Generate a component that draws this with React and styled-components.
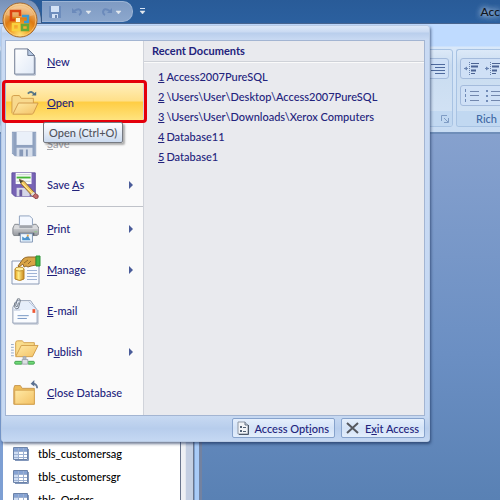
import styled, { createGlobalStyle } from "styled-components"

const GlobalStyle = createGlobalStyle`
    * {
        box-sizing: border-box;
    }

    body {
        margin: 0;
        overflow: hidden;
        font-family: Lato, "Open Sans", sans-serif;
        font-size: 11px;
        font-weight: 500;
        font-variant-ligatures: none;
        color: #23237c;
    }

    button {
        font: inherit;
        font-variant-ligatures: none;
        color: inherit;
        background: none;
        border: 0;
        padding: 0;
        text-align: left;
    }

    svg {
        display: block;
        flex: none;
    }

    ul, ol {
        list-style: none;
        margin: 0;
        padding: 0;
    }
`

const NewIcon = () => (
    <svg width="28" height="28" viewBox="0 0 30 30">
        <path d="M4 1h14l7 7v20H4z" fill="url(#paper)" stroke="#66738c" />
        <path d="M18 1v7h7z" fill="#b9cbe5" stroke="#66738c" />
        <path d="M5 29h21V10" fill="none" stroke="#9aa7bd" />
    </svg>
)

const OpenIcon = () => (
    <svg width="28" height="28" viewBox="0 0 30 30">
        <path d="M1 26V9q0-2 2-2h6l2 3h13v5" fill="#f8d98d" stroke="#d19b48" />
        <path d="M2 27l6-12h21l-5 11q-1 1-2 1z" fill="url(#folder)" stroke="#cf984a" />
        <path d="M18 5q4-4 7 1" fill="none" stroke="#5c7b88" strokeWidth="2" />
        <path d="M22 7h5V3z" fill="#4c6c82" />
    </svg>
)

const SaveIcon = () => (
    <svg width="28" height="28" viewBox="0 0 30 30">
        <path d="M1 2h26v26H4l-3-3z" fill="#8fa1bf" />
        <path d="M6 2h17v14H6z" fill="#eaf0f9" />
        <path d="M6 19h17v9H6z" fill="#d6deeb" />
        <path d="M9 21h4v7H9zM16 21h2v7h-2z" fill="#8799b8" />
        <path d="M2 3v22M26 3v24" stroke="#a9b8d0" />
    </svg>
)

const SaveAsIcon = () => (
    <svg width="28" height="28" viewBox="0 0 30 30">
        <path d="M1 2h25v25H4l-3-3z" fill="#7763b5" stroke="#5f4e9d" />
        <path d="M5 2h17v12H5z" fill="#fafcfb" />
        <path d="M6 4h15M6 11h15" stroke="#c3cec8" />
        <path d="M6 7h15" stroke="#45b535" strokeWidth="2" />
        <path d="M6 18h14v9H6z" fill="#d5d6e8" />
        <path d="M9 20h3v7H9z" fill="#6a5a9c" />
        <path d="M9 9l5 2 12 13-3 3-12-13z" fill="#f2c65c" stroke="#896438" />
        <path d="M12 13l12 12" stroke="#fff0a4" />
        <path d="M9 9l1 4 3-2z" fill="#443" />
        <path d="M23 27l3-3 3 2q1 3-2 4z" fill="#c66b6c" stroke="#884244" />
        <path d="M22 26l3-3" stroke="#ddd" strokeWidth="2" />
    </svg>
)

const PrintIcon = () => (
    <svg width="28" height="28" viewBox="0 0 30 30">
        <path d="M9 1h11l3 3v9H9z" fill="#f4f8ff" stroke="#8b9ebb" />
        <path d="M4 10h4v3h16v-3h3l3 4v6l-2 2H3l-1-2v-6z" fill="url(#metal)" stroke="#80848b" />
        <path d="M4 11h23l2 4H3z" fill="#d9dadd" />
        <path d="M9 11h14v3H9z" fill="#a2a6ad" />
        <path d="M8 19h17v3H8z" fill="#5f6670" />
        <path d="M25 18h3" stroke="#8fcb87" strokeWidth="1" />
        <path d="M10 20h13v9H10z" fill="#eef7ff" stroke="#7e93b3" />
        <path d="M12 27v-4l3 2 3-3 3 5z" fill="#4c94ce" />
        <path d="M17 21h2v2h-2z" fill="#e9a643" />
    </svg>
)

const ManageIcon = () => (
    <svg width="30" height="30" viewBox="0 0 30 30">
        <path d="M1 6h27v23H1z" fill="#f8faff" stroke="#8b9ab5" />
        <path d="M16 15.500h10M16 18.500h10M16 21.500h10M16 24.500h10" stroke="#9fb3d6" />
        <path d="M4 14v10q5 3 9 0V14z" fill="url(#gold)" stroke="#b58227" />
        <ellipse cx="8.500" cy="14" rx="4.500" ry="2" fill="#fff0a0" stroke="#c2922e" />
        <path d="M7 11l5-7q2-2 5-2h8v8l-5 1-3 1-2-1-2 1-1-3-4 3z" fill="#d9a445" stroke="#94692a" />
        <path d="M13 8l4-3M17 9l3-3" stroke="#94692a" />
        <path d="M25 1h4v10h-4z" fill="#42b647" stroke="#2c9137" />
    </svg>
)

const MailIcon = () => (
    <svg width="28" height="28" viewBox="0 0 30 30">
        <path d="M2 11l4-7h15l7 10v14H2z" fill="#fafcff" stroke="#8795ad" />
        <path d="M3 14l4-9h14l7 9z" fill="#e6eefb" />
        <path d="M3 14h7M19 5l9 9" stroke="#b5c2d8" />
        <path d="M7 20h12M7 23h10" stroke="#7090c1" />
        <path d="M23 13h3v4h-3z" fill="#ee5836" />
        <path d="M4 6v5q1 3 4 1l2-8q0-3-3-2L5 9q0 2 2 1l1-4" fill="none" stroke="#6a7481" />
        <path d="M3 29h26V14" fill="none" stroke="#abb5c7" />
    </svg>
)

const PublishIcon = () => (
    <svg width="28" height="28" viewBox="0 0 30 30">
        <path d="M0 7h3M0 10h3M0 13h3M0 16h3M0 19h3" stroke="#91a6c5" />
        <path d="M5 19V5q0-2 2-2h5l2 2h11v4" fill="#f9dd8c" stroke="#d19d49" />
        <path d="M5 20l6-12h18l-6 12z" fill="url(#folder)" stroke="#d19d49" />
        <path d="M13 20h3v5h-3z" fill="#b4bbc4" stroke="#a0a6ae" />
        <rect x="4" y="25" width="8" height="3" rx="1" fill="#70da77" stroke="#409e4b" />
        <rect x="18" y="25" width="7" height="3" rx="1" fill="#70da77" stroke="#409e4b" />
        <path d="M12 23h6v5h-6z" fill="#dce0e4" stroke="#a0a6ae" />
    </svg>
)

const CloseIcon = () => (
    <svg width="28" height="28" viewBox="0 0 30 30">
        <path d="M3 27V10l1-3h6l2 3h13v17z" fill="#edbc59" stroke="#c79750" />
        <path d="M4 12h21v15H4z" fill="url(#folder)" stroke="#d5a452" />
        <path d="M23 5q5 0 5 5" fill="none" stroke="#667b99" strokeWidth="2" />
        <path d="M21 5l4-4v7z" fill="#596f91" />
    </svg>
)

const OfficeLogo = () => (
    <svg width="36" height="36" viewBox="0 0 36 36">
        <defs>
            <radialGradient id="orb" cx=".5" cy=".95" r=".9">
                <stop offset="0" stopColor="#ffe374" />
                <stop offset=".3" stopColor="#f6a92e" />
                <stop offset=".58" stopColor="#dd7a13" />
                <stop offset="1" stopColor="#f1c68b" />
            </radialGradient>
            <linearGradient id="paper" x2="1" y2="1">
                <stop stopColor="#fff" />
                <stop offset="1" stopColor="#e0e9f7" />
            </linearGradient>
            <linearGradient id="folder" x2="1" y2="1">
                <stop stopColor="#ffeaa6" />
                <stop offset="1" stopColor="#f3c164" />
            </linearGradient>
            <linearGradient id="metal" x2="0" y2="1">
                <stop stopColor="#e5e6e8" />
                <stop offset="1" stopColor="#94979d" />
            </linearGradient>
            <linearGradient id="gold">
                <stop stopColor="#e8a520" />
                <stop offset=".4" stopColor="#ffeb85" />
                <stop offset="1" stopColor="#c8861d" />
            </linearGradient>
        </defs>
        <circle cx="18" cy="18" r="17" fill="url(#orb)" stroke="#a3672c" />
        <circle cx="18" cy="18" r="16" fill="none" stroke="#fbd799" opacity=".6" />
        <path d="M4 13q4-9 14-9t14 9q-13 5-28 0z" fill="#fff" opacity=".22" />
        <g fill="none" strokeWidth="2.500">
            <path d="M13 18H9V9h9v5" stroke="#dc4312" />
            <path d="M20 14h6v6h-4" stroke="#3a9ad3" />
            <path d="M17 22h-6v6h6z" stroke="#f9d13e" />
            <path d="M20 23h6v5h-6z" stroke="#67a936" />
        </g>
        <path d="M14 16h4v4h-4z" fill="#fff1c9" />
    </svg>
)

const DiskGlyph = () => (
    <svg width="14" height="14" viewBox="0 0 14 14">
        <path d="M1 1h12v12H2l-1-1z" fill="#6d8dbd" />
        <path d="M3 1h8v6H3zM4 9h6v4H4z" fill="#d3e2f6" />
        <path d="M7 10h2v3H7z" fill="#6d87b0" />
    </svg>
)

const UndoGlyph = ({ flip }) => (
    <svg width="12" height="12" viewBox="0 0 12 12">
        <g transform={flip ? "matrix(-1 0 0 1 12 0)" : undefined}>
            <path d="M3 5q6-4 7 1 0 2-2 3" fill="none" stroke="#6b8abb" strokeWidth="2" />
            <path d="M1 2v5h5z" fill="#6b8abb" />
        </g>
    </svg>
)

const DropGlyph = ({ bar }) => (
    <svg width="7" height="9" viewBox="0 0 7 9">
        {bar && <path d="M1 1.500h5" stroke="#d8e4f5" />}
        <path d="M1 4h5L3.500 7z" fill="#e4e9ee" stroke="#e4e9ee" strokeWidth=".5" />
    </svg>
)

const TableGlyph = () => (
    <svg width="16" height="14" viewBox="0 0 16 14">
        <path d="M.5.5h14v12H.5z" fill="#fff" stroke="#6c83a9" />
        <path d="M1 1h13v3H1z" fill="#86a3d3" />
        <path d="M1 4h4v8H1z" fill="#d0def3" />
        <path d="M1 4.500h13M1 7.500h13M1 10.500h13M5.500 1v11M10.500 1v11" stroke="#9db1d2" />
        <path d="M15.500 2v11.500H2" fill="none" stroke="#8297bb" />
    </svg>
)

const IndentGlyph = ({ back }) => (
    <svg width="15" height="13" viewBox="0 0 15 13">
        <path d="M7 1.500h8M7 11.500h4" stroke="#4c6493" />
        <path d="M7 4.500h7M7 8.500h5" stroke="#4a6294" strokeWidth="2" />
        <path d="M5.500 0v13" stroke="#6780ab" strokeDasharray="1 1" />
        <path d="M0 6.500h4" stroke="#7089b5" />
        <path d={back ? "M0 6.500l3-2v4z" : "M4 6.500l-3-2v4z"} fill="#6a84b2" />
    </svg>
)

const ListGlyph = ({ dots }) => (
    <svg width="15" height="13" viewBox="0 0 15 13">
        <path d="M6 2.500h9M6 6.500h9M6 11.500h9" stroke="#7287ad" />
        {dots
            ? <path d="M1 1h2v2H1zM1 6h2v2H1zM1 11h2v2H1z" fill="#718bb7" />
            : <path d="M1.500 0v3M1.500 5v3M1.500 10v3" stroke="#718bb7" />}
    </svg>
)

const AlignGlyph = () => (
    <svg width="14" height="12" viewBox="0 0 14 12">
        <path d="M0 1.500h14M4 4.500h10M0 7.500h14M4 10.500h10" stroke="#4f6a9d" />
    </svg>
)

const OptionsGlyph = () => (
    <svg width="12" height="14" viewBox="0 0 12 14">
        <path d="M1 1h7l3 3v9H1z" fill="#f2f4f7" stroke="#8d97a5" />
        <path d="M11.500 4v9.500H2" fill="none" stroke="#4c5868" />
        <path d="M8 1v3h3" fill="#c4cfdf" stroke="#687485" />
        <path d="M3 5h2v2H3zM3 9h2v2H3z" fill="#536275" />
        <path d="M6 6.500h3M6 10.500h3" stroke="#536275" />
    </svg>
)

const ExitGlyph = () => (
    <svg width="14" height="14" viewBox="0 0 14 14">
        <path d="M1 2l11 10M12 2L1 12" stroke="#55585f" strokeWidth="2" />
    </svg>
)

const menuItems = [
    { icon: NewIcon, label: "_New" },
    { icon: OpenIcon, label: "_Open", active: true },
    { icon: SaveIcon, label: "_Save", disabled: true },
    { icon: SaveAsIcon, label: "Save _As", arrow: true },
    { icon: PrintIcon, label: "_Print", arrow: true, divider: true },
    { icon: ManageIcon, label: "_Manage", arrow: true },
    { icon: MailIcon, label: "_E-mail" },
    { icon: PublishIcon, label: "P_ublish", arrow: true },
    { icon: CloseIcon, label: "_Close Database" },
]

const recent = [
    "Access2007PureSQL",
    "\\Users\\User\\Desktop\\Access2007PureSQL",
    "\\Users\\User\\Downloads\\Xerox Computers",
    "Database11",
    "Database1",
]

const tables = ["tbls_customersag", "tbls_customersgr", "tbls_Orders"]

// the letter after "_" is the access key
const KeyLabel = ({ text }) => {
    const [before, after] = text.split("_")
    return (
        <span>
            {before}<u>{after[0]}</u>{after.slice(1)}
        </span>
    )
}

const App = () => {
    return (
        <>
            <GlobalStyle />
            <Window>
                <TitleBar>
                    <OrbCorner />
                    <QuickAccess>
                        <ToolButton aria-label="Save"><DiskGlyph /></ToolButton>
                        <ToolButton aria-label="Undo"><UndoGlyph /><DropGlyph /></ToolButton>
                        <ToolButton aria-label="Redo"><UndoGlyph flip /><DropGlyph /></ToolButton>
                    </QuickAccess>
                    <ToolButton aria-label="Customize toolbar"><DropGlyph bar /></ToolButton>
                    <Title>Acc</Title>
                </TitleBar>
                <Ribbon>
                    <Group $grow>
                        <GroupTools $end>
                            <ToolBox><ToolButton aria-label="Align right"><AlignGlyph /></ToolButton></ToolBox>
                        </GroupTools>
                        <GroupLabel>
                            <svg width="8" height="8" viewBox="0 0 8 8">
                                <path d="M.5 6V.5H6M3 3l4 4M7.500 3v4.500H3" fill="none" stroke="#7f9cc4" />
                            </svg>
                        </GroupLabel>
                    </Group>
                    <Group>
                        <GroupTools>
                            <ToolBox>
                                <ToolButton aria-label="Decrease indent"><IndentGlyph back /></ToolButton>
                                <ToolButton aria-label="Increase indent"><IndentGlyph /></ToolButton>
                            </ToolBox>
                            <ToolBox>
                                <ToolButton aria-label="Numbering"><ListGlyph /></ToolButton>
                                <ToolButton aria-label="Bullets"><ListGlyph dots /></ToolButton>
                            </ToolBox>
                        </GroupTools>
                        <GroupLabel>Rich</GroupLabel>
                    </Group>
                </Ribbon>
                <Body>
                    <NavPane>
                        <TableList>
                            {tables.map((name) => (
                                <TableRow key={name}><TableGlyph />{name}</TableRow>
                            ))}
                        </TableList>
                        <ScrollTrack />
                    </NavPane>
                    <Splitter />
                    <Workspace />
                </Body>

                <Menu>
                    <Panels>
                        <Commands>
                            {menuItems.map(({ icon: Icon, label, active, disabled, arrow, divider }) => (
                                <Command key={label} $divider={divider}>
                                    <CommandButton $active={active} disabled={disabled}>
                                        <IconSlot><Icon /></IconSlot>
                                        <KeyLabel text={label} />
                                        {arrow && <Arrow width="4" height="8" viewBox="0 0 4 8"><path d="M0 0l4 4-4 4z" fill="#4a5c99" /></Arrow>}
                                    </CommandButton>
                                    {active && <Highlight />}
                                    {active && <Tooltip role="tooltip">Open (Ctrl+O)</Tooltip>}
                                </Command>
                            ))}
                        </Commands>
                        <Recent>
                            <RecentTitle>Recent Documents</RecentTitle>
                            <RecentList>
                                {recent.map((doc, i) => (
                                    <li key={doc}>
                                        <RecentLink href="#"><u>{i + 1}</u><span>{doc}</span></RecentLink>
                                    </li>
                                ))}
                            </RecentList>
                        </Recent>
                    </Panels>
                    <MenuFooter>
                        <FooterButton><OptionsGlyph /><KeyLabel text="Access Opt_ions" /></FooterButton>
                        <FooterButton><ExitGlyph /><KeyLabel text="E_xit Access" /></FooterButton>
                    </MenuFooter>
                </Menu>
                <OfficeButton aria-label="Office Button"><OfficeLogo /></OfficeButton>
            </Window>
        </>
    )
}

const Window = styled.div`
    position: relative;
    display: flex;
    flex-direction: column;
    height: 100vh;
    overflow: hidden;
    background: #6488bd;
`

const TitleBar = styled.header`
    display: flex;
    align-items: center;
    height: 24px;
    flex: none;
    background: linear-gradient(#295b98, #2b609f);
    border-bottom: 1px solid #48658f;
`

const OrbCorner = styled.div`
    width: 42px;
    height: 23px;
    background: linear-gradient(#7791b8, #93acd0);
    border-right: 1px solid #36567f;
    border-top-right-radius: 14px 22px;
`

const QuickAccess = styled.div`
    display: flex;
    align-items: center;
    gap: 9px;
    width: 91px;
    height: 21px;
    padding-left: 6px;
    background: linear-gradient(#7f9bc3, #8ca7cd);
    border: 1px solid #9cb4d5;
    border-left: 0;
    border-radius: 0 10px 10px 0;
    margin-right: 6px;
`

const ToolButton = styled.button`
    display: flex;
    align-items: center;
    gap: 2px;
`

const Title = styled.div`
    margin-left: auto;
    font-size: 12px;
    color: #10151d;
    text-shadow: 0 0 6px #c8d8ec, 0 0 6px #c8d8ec;
`

const Ribbon = styled.div`
    display: flex;
    flex: none;
    gap: 3px;
    height: 110px;
    padding: 25px 0 5px;
    background: linear-gradient(#bfdbff 22px, #d9e8f9 23px, #c8dcf3);
    border-bottom: 2px solid #6f8eb9;
`

const Group = styled.section`
    display: flex;
    flex-direction: column;
    flex: ${({ $grow }) => ($grow ? "1" : "none")};
    width: 44px;
    overflow: hidden;
    border: 1px solid #a8c3e3;
    border-right-width: ${({ $grow }) => ($grow ? "1px" : "0")};
    border-radius: ${({ $grow }) => ($grow ? "3px" : "3px 0 0 3px")};
    background: linear-gradient(#dce9f8, #c9dcf0 20%, #d3e3f5);
`

const GroupTools = styled.div`
    display: flex;
    flex-direction: column;
    align-items: ${({ $end }) => ($end ? "flex-end" : "flex-start")};
    gap: 6px;
    flex: 1;
    padding: 8px 3px 0;
`

const ToolBox = styled.div`
    display: flex;
    gap: 6px;
    height: 21px;
    padding: 0 3px;
    border: 1px solid #a4bbdc;
    border-radius: 3px;
    background: #cfe0f6;
`

const GroupLabel = styled.div`
    display: flex;
    align-items: center;
    justify-content: flex-end;
    height: 15px;
    padding: 0 3px;
    background: #c1d8f1;
    color: #4069a5;
`

const Body = styled.main`
    display: flex;
    flex: 1;
    min-height: 0;
    border-left: 3px solid #7d9fd3;
`

const NavPane = styled.nav`
    display: flex;
    width: 191px;
    overflow: hidden;
    background: #fff;
`

const TableList = styled.ul`
    flex: 1;
    padding-top: 308px;
`

const TableRow = styled.li`
    display: flex;
    align-items: center;
    gap: 9px;
    height: 23px;
    padding-left: 10px;
    color: #000;
`

const ScrollTrack = styled.div`
    width: 14px;
    border: solid #69758d;
    border-width: 0 1px;
    background: linear-gradient(90deg, #eef0f4 35%, #c4cfe2 45%);
`

const Splitter = styled.div`
    width: 8px;
    background: #a9cbf7;
    border: solid #7e9fcb;
    border-width: 0 3px 0 1px;
    border-right-color: #7382a0;
`

const Workspace = styled.div`
    flex: 1;
    background: linear-gradient(#86a1ce, #6b8fc3 60%, #5981b4);
`

const Menu = styled.div`
    position: absolute;
    top: 25px;
    left: 1px;
    width: 429px;
    padding: 14px 4px 0 3px;
    border: 1px solid #b9cbe4;
    border-radius: 3px;
    background: linear-gradient(#dce8f8, #cadaf2 6px, #b9ceec 7px, #c9daf3 14px, #c6d9f3);
    box-shadow: 1px 2px 3px rgba(20, 40, 80, 0.6);
`

const Panels = styled.div`
    display: flex;
    border: 1px solid #a3b5d2;
`

const Commands = styled.ul`
    width: 138px;
    padding-bottom: 2px;
    background: #fafafa;
    border-right: 1px solid #d0d3da;
`

const Command = styled.li`
    position: relative;
    padding-top: ${({ $divider }) => ($divider ? "3px" : "0")};
    background: ${({ $divider }) => ($divider ? "linear-gradient(#bfc2c9, #bfc2c9) 41px 1px / 100% 1px no-repeat" : "none")};
`

const CommandButton = styled.button`
    display: flex;
    align-items: center;
    gap: 6px;
    width: 100%;
    height: 41px;
    padding: 0 10px 0 5px;
    background: ${({ $active }) => ($active ? "linear-gradient(#fff0c0, #ffe08a 45%, #ffce45 50%, #ffe789)" : "none")};

    &:disabled {
        color: #a2a4aa;
    }
`

const IconSlot = styled.span`
    width: 30px;
`

const Arrow = styled.svg`
    margin-left: auto;
`

const Highlight = styled.div`
    position: absolute;
    inset: -2px -4px 0;
    border: 3px solid #e4000b;
    border-radius: 4px;
`

const Tooltip = styled.div`
    position: absolute;
    z-index: 1;
    top: 40px;
    left: 37px;
    height: 21px;
    padding: 0 5px;
    line-height: 19px;
    white-space: nowrap;
    color: #50535c;
    background: linear-gradient(#fff, #cbdaef);
    border: 1px solid #767a82;
    border-radius: 2px;
    box-shadow: 2px 2px 2px rgba(0, 0, 0, 0.3);
`

const Recent = styled.section`
    flex: 1;
    background: #e9eaee;
`

const RecentTitle = styled.h2`
    margin: 0;
    padding-left: 8px;
    font-size: 11px;
    font-weight: 700;
    line-height: 20px;
    border-bottom: 1px solid #cfd2d8;
    box-shadow: 0 1px 0 #fafafa;
`

const RecentList = styled.ol`
    padding: 5px 0 0 14px;
`

const RecentLink = styled.a`
    display: flex;
    gap: 2px;
    line-height: 20px;
    color: inherit;
    text-decoration: none;
`

const MenuFooter = styled.footer`
    display: flex;
    justify-content: flex-end;
    gap: 6px;
    margin: 0 -4px 0 -3px;
    padding: 2px 4px 3px;
    background: linear-gradient(#c7d9f2, #b7cdec 50%, #c5d8f3);
`

const FooterButton = styled.button`
    display: flex;
    align-items: center;
    gap: 5px;
    height: 20px;
    padding: 0 5px 0 4px;
    border: 1px solid #87a3cc;
    border-radius: 2px;
    background: linear-gradient(#e5effc, #d4e3f7 50%, #e3eefc);
`

const OfficeButton = styled.button`
    position: absolute;
    top: 2px;
    left: 2px;
`

export default App
